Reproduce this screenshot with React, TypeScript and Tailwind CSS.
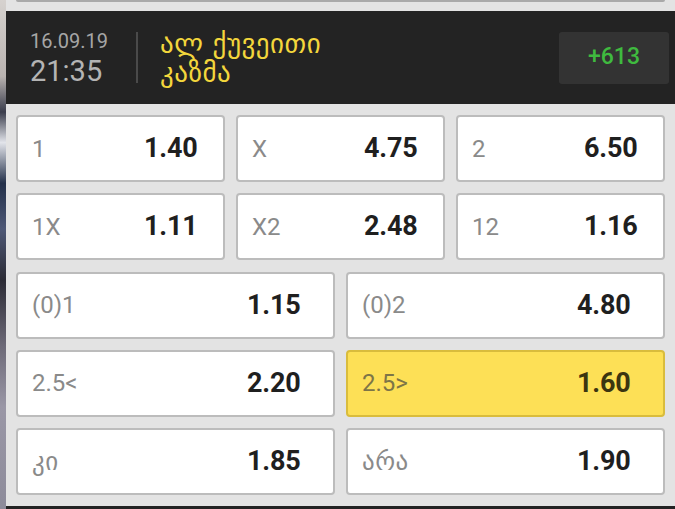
import React from "react";

type Odd = { label: string; value: string; active?: boolean; geo?: boolean };

const row3: Odd[][] = [
  [
    { label: "1", value: "1.40" },
    { label: "X", value: "4.75" },
    { label: "2", value: "6.50" },
  ],
  [
    { label: "1X", value: "1.11" },
    { label: "X2", value: "2.48" },
    { label: "12", value: "1.16" },
  ],
];

const row2: Odd[][] = [
  [
    { label: "(0)1", value: "1.15" },
    { label: "(0)2", value: "4.80" },
  ],
  [
    { label: "2.5<", value: "2.20" },
    { label: "2.5>", value: "1.60", active: true },
  ],
  [
    { label: "კი", value: "1.85", geo: true },
    { label: "არა", value: "1.90", geo: true },
  ],
];

const font = { fontFamily: "Roboto, 'DejaVu Sans', sans-serif" };
const geoFont = { fontFamily: "'DejaVu Sans', sans-serif" };

function Card({ o, wide }: { o: Odd; wide?: boolean }) {
  return (
    <div
      className={
        "flex h-[67px] items-center rounded-[4px] border-2 pl-[14px] " +
        (o.active ? "border-[#d9bc3c] bg-[#fde056]" : "border-[#bcbcbc] bg-white")
      }
    >
      <div
        className={
          "shrink-0 leading-none " +
          (o.geo ? "text-[25px] tracking-[0.5px] " : "text-[24px] ") +
          (wide ? "w-[215px] " : "w-[112px] ") +
          (o.active ? "text-[#7d7547]" : "text-[#8a8a8a]")
        }
        style={o.geo ? geoFont : undefined}
      >
        {o.label}
      </div>
      <div
        className={
          "text-[27px] font-bold leading-none tracking-[-0.2px] " +
          (o.active ? "text-[#3b3510]" : "text-[#1f1f1f]")
        }
      >
        {o.value}
      </div>
    </div>
  );
}

export default function App() {
  return (
    <div className="flex h-[509px] w-[675px] overflow-hidden" style={font}>
      <div className="w-[6px] shrink-0 bg-[linear-gradient(180deg,#d6d2cf_0%,#b9b3b0_15%,#3a3d4c_22%,#e2e4ea_28%,#23304a_36%,#4e5876_45%,#2b2b35_55%,#6d6a78_68%,#9a97a6_80%,#8d8b9a_100%)]" />
      <div className="flex min-w-0 flex-1 flex-col bg-[#e3e3e3]">
        <div className="h-[11px] shrink-0 px-[10px]">
          <div className="h-[2px] rounded-b-[3px] bg-[#a9a9a9]" />
        </div>
        <div className="flex h-[93px] shrink-0 items-center bg-[#232323] pl-[24px] pr-[6px]">
          <div className="flex w-[106px] flex-col">
            <div className="text-[20px] leading-[24px] text-[#a6a6a6]">16.09.19</div>
            <div className="mt-[2px] text-[29px] leading-[32px] text-[#b4b4b4]">21:35</div>
          </div>
          <div className="h-[51px] w-[2px] bg-[#4a4a4a]" />
          <div
            className="ml-[22px] flex-1 text-[27px] leading-[29px] tracking-[0.5px] text-[#f3d63c]"
            style={geoFont}
          >
            <div>ალ ქუვეითი</div>
            <div>კაზმა</div>
          </div>
          <div className="flex h-[52px] w-[110px] items-center justify-center rounded-[3px] bg-[#333333] text-[23px] font-medium text-[#3fba3f]">
            +613
          </div>
        </div>
        <div className="flex flex-1 flex-col gap-[11.25px] px-[10px] pt-[11px]">
          {row3.map((r, i) => (
            <div key={"a" + i} className="grid grid-cols-3 gap-[11px]">
              {r.map((o) => (
                <Card key={o.label} o={o} />
              ))}
            </div>
          ))}
          {row2.map((r, i) => (
            <div key={"b" + i} className="grid grid-cols-2 gap-[11px]">
              {r.map((o) => (
                <Card key={o.label} o={o} wide />
              ))}
            </div>
          ))}
        </div>
        <div className="h-[3px] shrink-0 bg-[#222222]" />
      </div>
    </div>
  );
}
